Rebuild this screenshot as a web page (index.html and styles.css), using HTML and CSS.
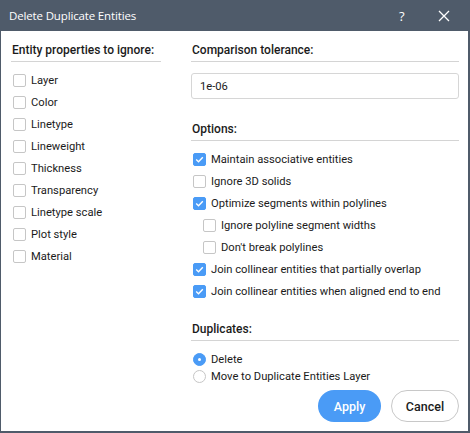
FILE: index.html
```html
<!DOCTYPE html>
<html>
<head>
<meta charset="utf-8">
<link rel="stylesheet" href="styles.css">
</head>
<body>
<div class="dialog">
  <div class="titlebar">
    <span class="title">Delete Duplicate Entities</span>
    <span class="help">?</span>
    <span class="close"><svg width="12" height="12" viewBox="0 0 12 12"><path d="M1 1L11 11M11 1L1 11" stroke="#fff" stroke-width="1.3" fill="none"/></svg></span>
  </div>
  <div class="content">
    <div class="col left">
      <div class="heading">Entity properties to ignore:</div>
      <div class="list">
        <label class="row"><span class="cb"></span>Layer</label>
        <label class="row"><span class="cb"></span>Color</label>
        <label class="row"><span class="cb"></span>Linetype</label>
        <label class="row"><span class="cb"></span>Lineweight</label>
        <label class="row"><span class="cb"></span>Thickness</label>
        <label class="row"><span class="cb"></span>Transparency</label>
        <label class="row"><span class="cb"></span>Linetype scale</label>
        <label class="row"><span class="cb"></span>Plot style</label>
        <label class="row"><span class="cb"></span>Material</label>
      </div>
    </div>
    <div class="col right">
      <div class="heading">Comparison tolerance:</div>
      <div class="input">1e-06</div>
      <div class="heading options">Options:</div>
      <div class="list rlist">
        <label class="row"><span class="cb on"><svg width="13" height="13" viewBox="0 0 13 13"><path d="M3.2 6.6L5.5 8.8L9.8 4.2" stroke="#fff" stroke-width="1.4" fill="none"/></svg></span>Maintain associative entities</label>
        <label class="row"><span class="cb"></span>Ignore 3D solids</label>
        <label class="row"><span class="cb on"><svg width="13" height="13" viewBox="0 0 13 13"><path d="M3.2 6.6L5.5 8.8L9.8 4.2" stroke="#fff" stroke-width="1.4" fill="none"/></svg></span>Optimize segments within polylines</label>
        <label class="row sub"><span class="cb"></span>Ignore polyline segment widths</label>
        <label class="row sub"><span class="cb"></span>Don't break polylines</label>
        <label class="row"><span class="cb on"><svg width="13" height="13" viewBox="0 0 13 13"><path d="M3.2 6.6L5.5 8.8L9.8 4.2" stroke="#fff" stroke-width="1.4" fill="none"/></svg></span>Join collinear entities that partially overlap</label>
        <label class="row"><span class="cb on"><svg width="13" height="13" viewBox="0 0 13 13"><path d="M3.2 6.6L5.5 8.8L9.8 4.2" stroke="#fff" stroke-width="1.4" fill="none"/></svg></span>Join collinear entities when aligned end to end</label>
      </div>
      <div class="heading dups">Duplicates:</div>
      <div class="radios">
        <label class="rrow"><span class="rb on"></span>Delete</label>
        <label class="rrow"><span class="rb"></span>Move to Duplicate Entities Layer</label>
      </div>
      <div class="buttons">
        <button class="btn apply">Apply</button>
        <button class="btn cancel">Cancel</button>
      </div>
    </div>
  </div>
</div>
</body>
</html>
```
FILE: styles.css
```css
html, body {
  margin: 0;
  padding: 0;
  background: #fff;
}
.dialog {
  width: 470px;
  height: 433px;
  box-sizing: border-box;
  border: 1px solid #4f5b6a;
  border-right-width: 2px;
  border-bottom-width: 2px;
  border-top: none;
  font-family: Roboto, "Liberation Sans", sans-serif;
  font-size: 11.2px;
  color: #1b1b1b;
  display: flex;
  flex-direction: column;
}
.titlebar {
  height: 31px;
  background: #4f5b6a;
  color: #fff;
  display: flex;
  align-items: center;
  margin: 0 -2px 0 -1px;
  padding: 0 0 0 9px;
}
.title {
  font-family: "Open Sans", sans-serif;
  font-size: 11.5px;
  flex: 1;
  letter-spacing: -0.15px;
}
.help {
  font-family: "Open Sans", sans-serif;
  font-size: 13px;
  width: 12px;
  margin-right: 27px;
}
.close {
  width: 12px;
  height: 12px;
  margin-right: 20px;
  display: flex;
}
.content {
  display: flex;
  gap: 30px;
  padding: 11px 9px 0 10px;
}
.col.left {
  width: 150px;
}
.col.right {
  flex: 1;
  display: flex;
  flex-direction: column;
}
.heading {
  font-weight: 500;
  font-size: 12px;
  line-height: 16px;
  padding: 0 0 3px 1px;
  border-bottom: 1px solid #d4d4d4;
}
.list {
  margin-top: 7px;
}
.rlist {
  margin-top: 7px;
}
.row {
  display: flex;
  align-items: center;
  height: 22px;
  padding-left: 2px;
}
.row.sub {
  padding-left: 12px;
}
.cb {
  width: 13px;
  height: 13px;
  box-sizing: border-box;
  border: 1px solid #c6c6c6;
  border-radius: 2px;
  background: #fff;
  margin-right: 5px;
  display: flex;
  flex: none;
}
.cb.on {
  background: #4a9bf6;
  border-color: #4a9bf6;
}
.cb.on svg {
  margin: -1px;
}
.input {
  margin-top: 11px;
  height: 26px;
  box-sizing: border-box;
  border: 1px solid #d6d6d6;
  border-radius: 3px;
  padding: 0 8px;
  display: flex;
  align-items: center;
}
.options {
  margin-top: 22px;
}
.dups {
  margin-top: 19px;
}
.radios {
  margin-top: 10px;
}
.rrow {
  display: flex;
  align-items: center;
  height: 17px;
  padding-left: 2px;
}
.rb {
  width: 13px;
  height: 13px;
  box-sizing: border-box;
  border: 1px solid #c6c6c6;
  border-radius: 50%;
  margin-right: 5px;
  flex: none;
  position: relative;
}
.rb.on {
  background: #4a9bf6;
  border-color: #4a9bf6;
}
.rb.on::after {
  content: "";
  position: absolute;
  left: 4px;
  top: 4px;
  width: 3px;
  height: 3px;
  border-radius: 50%;
  background: #fff;
}
.buttons {
  display: flex;
  justify-content: flex-end;
  gap: 10px;
  margin-top: 5px;
}
.btn {
  height: 32px;
  border-radius: 16px;
  font-family: Roboto, "Liberation Sans", sans-serif;
  font-size: 12.5px;
  font-weight: 500;
  padding: 0;
}
.apply {
  width: 63px;
  background: #4a9bf6;
  color: #fff;
  border: none;
}
.cancel {
  width: 68px;
  background: #fff;
  color: #1b1b1b;
  border: 1px solid #c8c8c8;
}
```
